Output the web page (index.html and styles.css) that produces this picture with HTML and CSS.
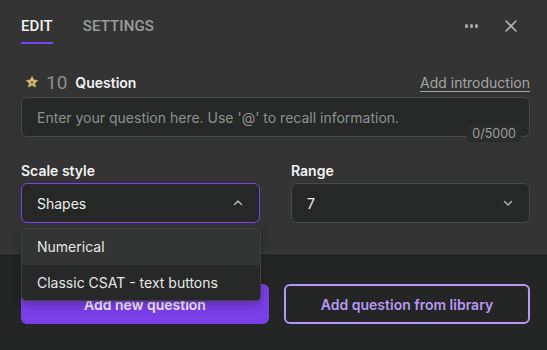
FILE: index.html
```html
<!DOCTYPE html>
<html lang="en">
<head>
    <meta charset="UTF-8">
    <title>Edit question</title>
    <link rel="stylesheet" href="styles.css">
</head>
<body>
    <div class="editor">
        <div class="panel">
            <header class="topbar">
                <nav class="tabs">
                    <span class="tab active">EDIT</span>
                    <span class="tab">SETTINGS</span>
                </nav>
                <div class="actions">
                    <span class="dots"><i></i><i></i><i></i></span>
                    <svg class="close" width="12" height="12" viewBox="0 0 12 12">
                        <path d="M1 1l10 10M11 1L1 11" stroke="#b3b5b4" stroke-width="1.6" stroke-linecap="round"/>
                    </svg>
                </div>
            </header>

            <div class="question-head">
                <div class="q-title">
                    <svg class="star" width="14" height="14" viewBox="0 0 24 24">
                        <path d="M12 2.5l2.9 6.1 6.6.8-4.9 4.6 1.3 6.6L12 17.3l-5.9 3.3 1.3-6.6-4.9-4.6 6.6-.8z" fill="#e7c982" stroke="#caa95e" stroke-width="1.5" stroke-linejoin="round"/>
                        <path d="M12 8.5l1.2 2.6 2.8.3-2.1 1.9.6 2.8L12 14.7l-2.5 1.4.6-2.8-2.1-1.9 2.8-.3z" fill="#7d6a3e"/>
                    </svg>
                    <span class="q-num">10</span>
                    <span class="q-label">Question</span>
                </div>
                <a class="intro-link">Add introduction</a>
            </div>

            <div class="input-box">
                <span class="placeholder">Enter your question here. Use '@' to recall information.</span>
                <span class="counter">0/5000</span>
            </div>

            <div class="fields">
                <div class="field">
                    <label>Scale style</label>
                    <div class="select open">
                        <span>Shapes</span>
                        <svg width="12" height="12" viewBox="0 0 12 12"><path d="M2.5 7.5L6 4l3.5 3.5" fill="none" stroke="#a9abaa" stroke-width="1.6" stroke-linecap="round" stroke-linejoin="round"/></svg>
                    </div>
                    <ul class="menu">
                        <li class="hover">Numerical</li>
                        <li>Classic CSAT - text buttons</li>
                    </ul>
                </div>
                <div class="field">
                    <label>Range</label>
                    <div class="select">
                        <span>7</span>
                        <svg width="12" height="12" viewBox="0 0 12 12"><path d="M2.5 4.5L6 8l3.5-3.5" fill="none" stroke="#a9abaa" stroke-width="1.6" stroke-linecap="round" stroke-linejoin="round"/></svg>
                    </div>
                </div>
            </div>
        </div>

        <footer class="footer">
            <button class="btn primary">Add new question</button>
            <button class="btn outline">Add question from library</button>
        </footer>
    </div>
</body>
</html>
```

FILE: styles.css
```css
* {
    margin: 0;
    padding: 0;
    box-sizing: border-box;
}

body {
    background: #232625;
    font-family: 'Inter', 'Noto Sans', sans-serif;
    color: #e4e6e5;
    width: 547px;
    height: 350px;
    overflow: hidden;
}

.panel {
    background: #333433;
    padding: 0 17px 30px 21px;
    border-bottom: 1px solid #3e4140;
}

.topbar {
    display: flex;
    justify-content: space-between;
    align-items: flex-start;
    height: 64px;
}

.tabs {
    display: flex;
    gap: 30px;
    padding-top: 17px;
}

.tab {
    font-family: 'Roboto', sans-serif;
    font-size: 15px;
    font-weight: 500;
    line-height: 18px;
    color: #9a9c9b;
    letter-spacing: 0.1px;
    padding-bottom: 7px;
    border-bottom: 2px solid transparent;
}

.tab.active {
    color: #f2f2f2;
    border-bottom-color: #7a45f0;
}

.actions {
    display: flex;
    align-items: center;
    gap: 27px;
    padding-top: 20px;
    padding-right: 13px;
}

.dots {
    display: flex;
    gap: 1.5px;
}

.dots i {
    width: 3.5px;
    height: 3.5px;
    border-radius: 50%;
    background: #a8aaa9;
}

.question-head {
    display: flex;
    justify-content: space-between;
    align-items: center;
    height: 33px;
    padding-top: 3px;
}

.q-title {
    display: flex;
    align-items: center;
}

.star {
    margin-left: 4px;
    margin-right: 7px;
}

.q-num {
    font-family: 'Roboto', sans-serif;
    font-size: 19px;
    color: #8d8f8e;
    margin-right: 8px;
}

.q-label {
    font-size: 14px;
    font-weight: 600;
    color: #f2f2f2;
}

.intro-link {
    font-size: 14px;
    color: #a3a5a4;
    text-decoration: underline;
    text-underline-offset: 3px;
}

.input-box {
    position: relative;
    height: 40px;
    background: #262928;
    border: 1px solid #474a49;
    border-radius: 6px;
    padding: 0 15px;
    display: flex;
    align-items: center;
}

.placeholder {
    font-size: 14px;
    color: #8e9190;
}

.counter {
    position: absolute;
    right: 8px;
    bottom: -6px;
    background: #2a2d2c;
    color: #9ea09f;
    font-size: 12.5px;
    padding: 1px 5px;
    border-radius: 4px;
}

.fields {
    display: flex;
    gap: 31px;
    margin-top: 25px;
}

.field {
    position: relative;
    width: 240px;
}

.field label {
    display: block;
    font-size: 14px;
    font-weight: 600;
    color: #f2f2f2;
    margin-bottom: 4px;
}

.select {
    height: 40px;
    background: #252827;
    border: 1px solid #474a49;
    border-radius: 6px;
    display: flex;
    align-items: center;
    justify-content: space-between;
    padding: 0 15px;
    font-size: 14px;
    color: #eef0ef;
}

.select.open {
    border-color: #7a45f0;
}

.menu {
    position: absolute;
    top: 66px;
    left: 0;
    width: 240px;
    list-style: none;
    background: #262928;
    border: 1px solid #3f4241;
    border-radius: 5px;
    overflow: hidden;
    z-index: 5;
    box-shadow: 0 4px 10px rgba(0, 0, 0, 0.25);
}

.menu li {
    height: 35.5px;
    display: flex;
    align-items: center;
    padding: 0 15px;
    font-size: 14px;
    color: #e6e8e7;
}

.menu li.hover {
    background: #333534;
}

.footer {
    display: flex;
    gap: 15px;
    padding: 30px 17px 0 21px;
}

.btn {
    height: 40px;
    border-radius: 6px;
    font-family: 'Inter', sans-serif;
    font-size: 14px;
    font-weight: 600;
}

.btn.primary {
    width: 249px;
    background: #7b3fe8;
    border: none;
    color: #f4f0ff;
}

.btn.outline {
    width: 247px;
    background: transparent;
    border: 2px solid #b898f2;
    color: #b898f2;
}
```
